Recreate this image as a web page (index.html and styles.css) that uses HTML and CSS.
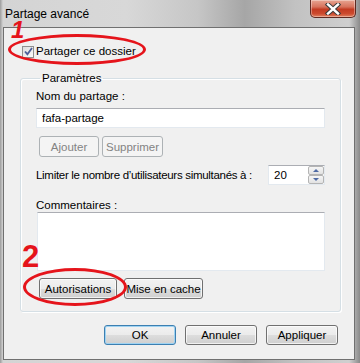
FILE: index.html
```html
<!DOCTYPE html>
<html lang="fr">

<head>
  <meta charset="UTF-8">
  <meta name="viewport" content="width=device-width, initial-scale=1.0">
  <title>Partage avancé</title>
  <link rel="stylesheet" href="styles.css">
</head>

<body>
  <div class="window">
    <!-- Title bar -->
    <div class="titlebar">
      <span class="title">Partage avancé</span>
      <button class="close" aria-label="Fermer">
        <svg width="18" height="12" viewBox="0 0 18 12">
          <path d="M4 1.5 L14 10.5 M14 1.5 L4 10.5" stroke="#3a3a3a" stroke-width="4.4" stroke-linecap="square" />
          <path d="M4 1.5 L14 10.5 M14 1.5 L4 10.5" stroke="#fff" stroke-width="2.4" stroke-linecap="square" />
        </svg>
      </button>
    </div>

    <div class="client">
      <label class="check-row">
        <span class="checkbox">
          <svg width="9" height="9" viewBox="0 0 9 9">
            <path d="M1 4.5 L3.4 7.2 L8 1" fill="none" stroke="#4b5e9a" stroke-width="1.8" />
          </svg>
        </span>
        Partager ce dossier
      </label>

      <fieldset class="group">
        <legend>Paramètres</legend>

        <div class="field-label">Nom du partage :</div>
        <input class="textbox" type="text" value="fafa-partage">

        <div class="btn-row">
          <button class="btn disabled btn-add">Ajouter</button>
          <button class="btn disabled btn-del">Supprimer</button>
        </div>

        <div class="limit-row">
          <span class="limit-label">Limiter le nombre d’utilisateurs simultanés à :</span>
          <div class="spin">
            <span class="spin-value">20</span>
            <div class="spin-arrows">
              <span class="arrow up"></span>
              <span class="arrow down"></span>
            </div>
          </div>
        </div>

        <div class="field-label comments-label">Commentaires :</div>
        <textarea class="comments"></textarea>

        <div class="btn-row btn-row-2">
          <button class="btn btn-perm">Autorisations</button>
          <button class="btn btn-cache">Mise en cache</button>
        </div>
      </fieldset>

      <div class="dialog-buttons">
        <button class="btn default">OK</button>
        <button class="btn">Annuler</button>
        <button class="btn">Appliquer</button>
      </div>
    </div>

    <!-- Red markers drawn over the screenshot -->
    <span class="mark mark-1">1</span>
    <span class="ring ring-1"></span>
    <span class="mark mark-2">2</span>
    <span class="ring ring-2"></span>
  </div>
</body>

</html>
```

FILE: styles.css
```css
/* Basic styling */
html,
body {
  margin: 0;
  padding: 0;
}

body {
  width: 360px;
  height: 363px;
  overflow: hidden;
  font-family: "Liberation Sans", Arial, sans-serif;
  font-size: 11.5px;
  color: #000;
}

.window {
  position: relative;
  width: 360px;
  height: 363px;
  display: flex;
  flex-direction: column;
  box-sizing: border-box;
  background: linear-gradient(90deg, #9c9c9c 0, #d4d4d4 3px, #d8d8d8 35%, #c6c6c6 55%, #a6a6a6 68%, #c2c2c2 82%, #cfcfcf 97%, #8a8a8a 100%);
}

/* Title bar */
.titlebar {
  height: 27px;
  display: flex;
  justify-content: space-between;
  align-items: flex-start;
  flex-shrink: 0;
}

.title {
  padding: 7px 0 0 5px;
  line-height: 15px;
  font-size: 12px;
}

.close {
  width: 46px;
  height: 18px;
  margin-right: 4px;
  padding: 0;
  border: 1px solid #5e2a22;
  border-top: none;
  border-radius: 0 0 5px 5px;
  background: linear-gradient(#e7a592 0, #d7735d 40%, #c33b22 55%, #cc4a2e 80%, #e08260 100%);
  box-shadow: inset 0 0 0 1px rgba(255, 255, 255, 0.35);
  display: flex;
  align-items: center;
  justify-content: center;
}

/* Client area */
.client {
  flex: 1;
  margin: 0 5px 3px 3px;
  border: 1px solid #707070;
  background-color: #f0f0f0;
  padding: 0 13px 0 16px;
}

.check-row {
  display: flex;
  align-items: center;
  gap: 2px;
  height: 15px;
  margin: 16px 0 12px 2px;
  line-height: 15px;
  white-space: nowrap;
}

.checkbox {
  width: 10px;
  height: 10px;
  border: 1px solid #8e8f8f;
  background: linear-gradient(135deg, #dcdcdc, #fbfbfb);
  display: flex;
  align-items: center;
  justify-content: center;
}

.group {
  margin: 0;
  padding: 0 15px 12px 15px;
  border: 1px solid #d5dfe5;
  border-radius: 3px;
  box-shadow: inset 1px 1px 0 #fff, 1px 1px 0 #fff;
  min-width: 0;
}

.group legend {
  padding: 0 2px;
  margin-left: 4px;
  line-height: 15px;
}

.field-label {
  margin-top: 3px;
  line-height: 15px;
}

.textbox {
  display: block;
  box-sizing: border-box;
  width: 100%;
  height: 20px;
  margin: 4px 0 0 0;
  padding: 0 0 0 5px;
  border: 1px solid #e3e9ef;
  border-top-color: #abadb3;
  background: #fff;
  font: inherit;
  color: #000;
}

.btn-row {
  display: flex;
  gap: 3px;
  margin: 8px 0 0 3px;
}

.btn {
  box-sizing: border-box;
  height: 21px;
  padding: 0;
  border: 1px solid #707070;
  border-radius: 3px;
  background: linear-gradient(#f2f2f2 0, #ebebeb 50%, #dddddd 51%, #cfcfcf 100%);
  box-shadow: inset 0 0 0 1px rgba(255, 255, 255, 0.7);
  font: inherit;
  color: #000;
  white-space: nowrap;
}

.btn.disabled {
  border-color: #adb2b5;
  background: #f4f4f4;
  box-shadow: none;
  color: #838383;
}

.btn-add {
  width: 60px;
}

.btn-del {
  width: 61px;
}

.limit-row {
  display: flex;
  justify-content: space-between;
  align-items: center;
  margin-top: 8px;
  line-height: 15px;
  white-space: nowrap;
}

.limit-label {
  letter-spacing: -0.3px;
}

.spin {
  width: 57px;
  height: 20px;
  box-sizing: border-box;
  display: flex;
  align-items: center;
  justify-content: space-between;
  border: 1px solid #e3e9ef;
  border-top-color: #abadb3;
  background: #fff;
}

.spin-value {
  padding-left: 5px;
}

.spin-arrows {
  width: 16px;
  height: 18px;
  display: flex;
  flex-direction: column;
}

.arrow {
  flex: 1;
  border: 1px solid #b4b4b4;
  border-radius: 2px;
  background: linear-gradient(#f6f6f6, #e2e2e2);
  position: relative;
}

.arrow::after {
  content: "";
  position: absolute;
  left: 4px;
  top: 2px;
  border-left: 3px solid transparent;
  border-right: 3px solid transparent;
}

.arrow.up::after {
  border-bottom: 3px solid #4f6aa4;
}

.arrow.down::after {
  border-top: 3px solid #4f6aa4;
}

.comments-label {
  margin-top: 14px;
  line-height: 13px;
}

.comments {
  display: block;
  box-sizing: border-box;
  width: calc(100% - 1px);
  height: 59px;
  margin: 0 0 0 1px;
  border: 1px solid #e3e9ef;
  border-top-color: #abadb3;
  background: #fff;
  resize: none;
}

.btn-row-2 {
  gap: 7px;
  margin-top: 7px;
}

.btn-perm {
  width: 78px;
}

.btn-cache {
  width: 79px;
}

.dialog-buttons {
  display: flex;
  justify-content: flex-end;
  gap: 9px;
  margin: 13px 3px 0 0;
}

.dialog-buttons .btn {
  width: 72px;
  height: 20px;
}

.btn.default {
  border-color: #3c7fb1;
  box-shadow: inset 0 0 0 1px #9fd3f2;
}

/* Red annotation marks */
.ring {
  position: absolute;
  border: 3px solid #e5141b;
  border-radius: 50%;
}

.ring-1 {
  left: 8px;
  top: 34px;
  width: 132px;
  height: 25px;
}

.ring-2 {
  left: 23px;
  top: 268px;
  width: 98px;
  height: 32px;
}

.mark {
  position: absolute;
  color: #e5141b;
  font-family: "Liberation Sans", Arial, sans-serif;
  font-weight: bold;
  line-height: 1;
}

.mark-1 {
  left: 11px;
  top: 18px;
  font-size: 24px;
  font-style: italic;
}

.mark-2 {
  left: 22px;
  top: 241px;
  font-size: 31px;
}
```
